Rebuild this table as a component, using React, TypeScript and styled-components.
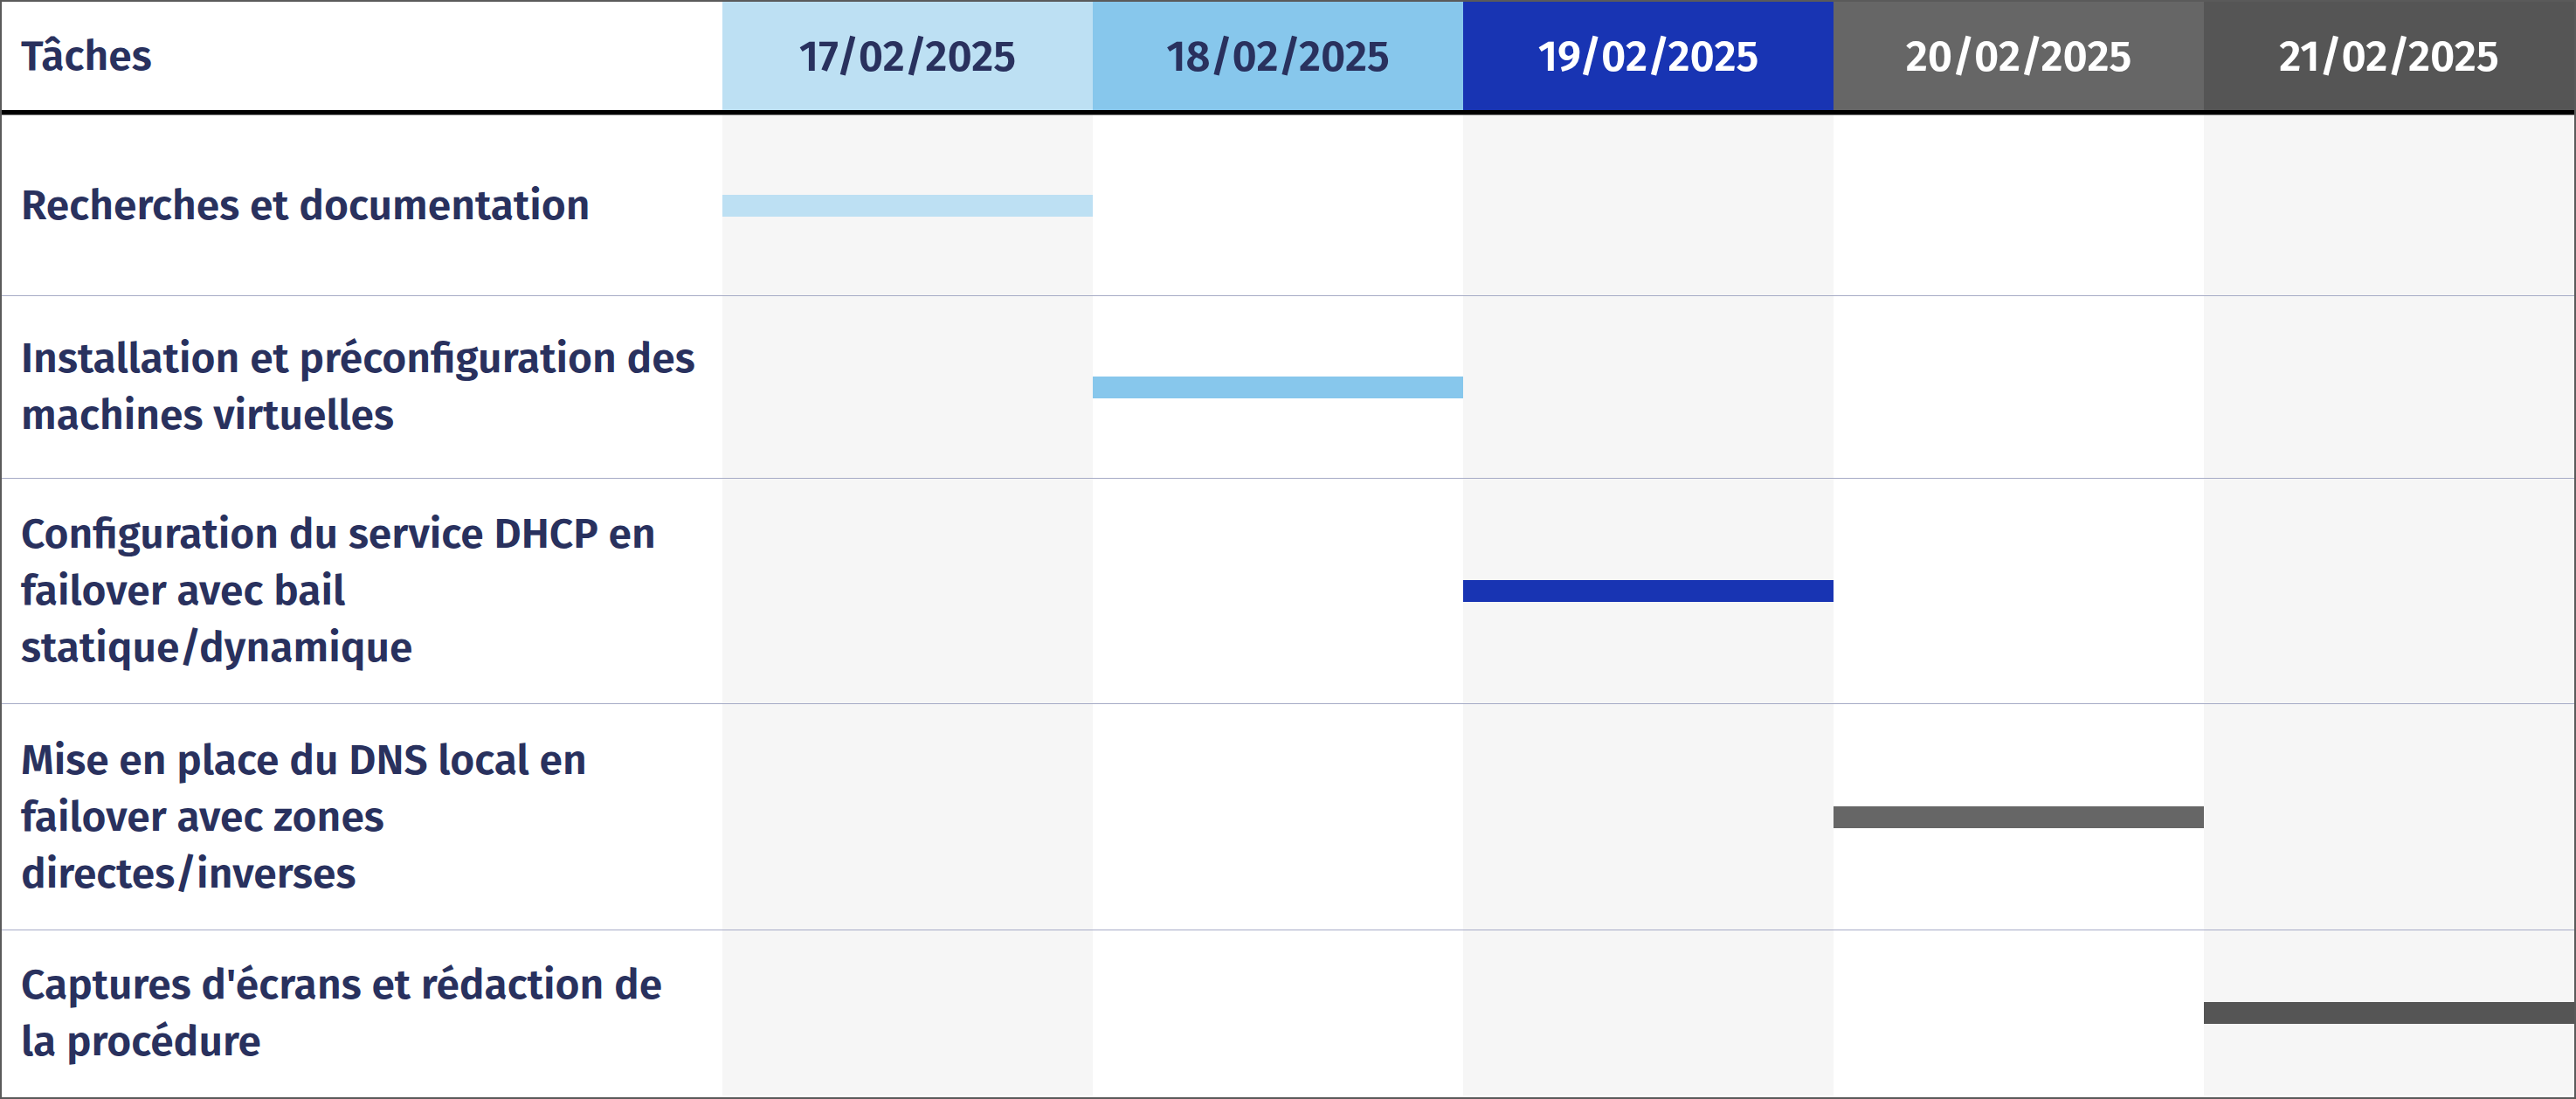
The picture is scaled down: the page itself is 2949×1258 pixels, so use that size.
import React from "react";
import styled, { createGlobalStyle } from "styled-components";

const GlobalStyle = createGlobalStyle`
  html, body {
    margin: 0;
    padding: 0;
    background: #ffffff;
  }
  * {
    box-sizing: border-box;
  }
`;

interface Day {
  label: string;
  color: string;
  text: string;
}

interface Task {
  lines: string[];
  height: number;
  day: number;
}

const days: Day[] = [
  { label: "17/02/2025", color: "#bde0f3", text: "#29315e" },
  { label: "18/02/2025", color: "#87c7ec", text: "#29315e" },
  { label: "19/02/2025", color: "#1834b3", text: "#ffffff" },
  { label: "20/02/2025", color: "#666666", text: "#ffffff" },
  { label: "21/02/2025", color: "#555555", text: "#ffffff" },
];

const tasks: Task[] = [
  { lines: ["Recherches et documentation"], height: 207, day: 0 },
  {
    lines: ["Installation et préconfiguration des", "machines virtuelles"],
    height: 209,
    day: 1,
  },
  {
    lines: [
      "Configuration du service DHCP en",
      "failover avec bail",
      "statique/dynamique",
    ],
    height: 258,
    day: 2,
  },
  {
    lines: [
      "Mise en place du DNS local en",
      "failover avec zones",
      "directes/inverses",
    ],
    height: 259,
    day: 3,
  },
  {
    lines: ["Captures d'écrans et rédaction de", "la procédure"],
    height: 190,
    day: 4,
  },
];

const App = () => {
  return (
    <>
      <GlobalStyle />
      <Chart>
        <HeaderRow>
          <TaskHead>Tâches</TaskHead>
          {days.map((d) => (
            <DayHead key={d.label} bg={d.color} fg={d.text}>
              {d.label}
            </DayHead>
          ))}
        </HeaderRow>

        {tasks.map((t, i) => (
          <Row key={i} h={t.height} first={i === 0}>
            <TaskCell>
              {t.lines.map((l) => (
                <Line key={l}>{l}</Line>
              ))}
            </TaskCell>
            {days.map((d, j) => (
              <DayCell key={d.label} shaded={j % 2 === 0}>
                {t.day === j && <Bar color={d.color} />}
              </DayCell>
            ))}
          </Row>
        ))}
      </Chart>
    </>
  );
};

export default App;

const Chart = styled.div`
  width: 2949px;
  height: 1258px;
  border: 2px solid #5a5a5a;
  background: #ffffff;
  font-family: "Fira Sans", "Open Sans", sans-serif;
  font-weight: 600;
  color: #29315e;
  overflow: hidden;
`;

const columns = "825px repeat(5, 424px)";

const HeaderRow = styled.div`
  display: grid;
  grid-template-columns: ${columns};
  height: 129px;
  border-bottom: 5px solid #000000;
  box-shadow: 0 1px 0 #7a7a7a;
  position: relative;
  z-index: 1;
`;

const TaskHead = styled.div`
  display: flex;
  align-items: center;
  padding-left: 22px;
  font-size: 48px;
`;

const DayHead = styled.div<{ bg: string; fg: string }>`
  display: flex;
  align-items: center;
  justify-content: center;
  background: ${(p) => p.bg};
  color: ${(p) => p.fg};
  font-size: 49px;
`;

const Row = styled.div<{ h: number; first: boolean }>`
  display: grid;
  grid-template-columns: ${columns};
  height: ${(p) => p.h}px;
  border-top: ${(p) => (p.first ? "1px solid transparent" : "1px solid #a6abc6")};
`;

const TaskCell = styled.div`
  display: flex;
  flex-direction: column;
  justify-content: center;
  padding-left: 22px;
  font-size: 48px;
  line-height: 65px;
`;

const Line = styled.span`
  display: block;
  white-space: nowrap;
`;

const DayCell = styled.div<{ shaded: boolean }>`
  display: flex;
  align-items: center;
  background: ${(p) => (p.shaded ? "#f6f6f6" : "#ffffff")};
`;

const Bar = styled.div<{ color: string }>`
  width: 100%;
  height: 25px;
  background: ${(p) => p.color};
`;
